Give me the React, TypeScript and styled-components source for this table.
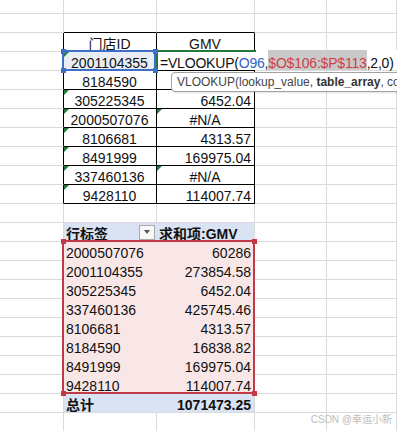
import React from "react";
import styled, { createGlobalStyle } from "styled-components";

const GlobalStyle = createGlobalStyle`
    html, body {
        margin: 0;
        padding: 0;
        background: #ffffff;
        overflow: hidden;
    }
    body {
        font-family: "Liberation Sans", Arial, "Noto Sans CJK SC", sans-serif;
        color: #111111;
    }
`;

type Line = "grid" | "black" | "none";

interface CellSpec {
    text?: React.ReactNode;
    align?: "left" | "center" | "right";
    bold?: boolean;
    flag?: boolean;
    bg?: string;
    right?: Line;
    bottom?: Line;
    dropdown?: boolean;
}

const HEADER_BG = "#dae3f3";
const PIVOT_BG = "#f9e7e8";
const GREEN = "#217a3c";

const lineColor = (l?: Line) =>
    l === "black" ? "#000000" : l === "none" ? "transparent" : "#dadada";

const Sheet = styled.div`
    position: relative;
    width: 397px;
    height: 431px;
    overflow: hidden;
    display: grid;
    grid-template-columns: 64px 93px 98px 72px 1fr;
    grid-template-rows: 14px repeat(22, 19px);
`;

const Cell = styled.div<{
    $r: number;
    $c: number;
    $align: string;
    $bold?: boolean;
    $bg?: string;
    $right?: Line;
    $bottom?: Line;
    $flag?: boolean;
}>`
    grid-row: ${(p) => p.$r + 1};
    grid-column: ${(p) => p.$c + 1};
    position: relative;
    box-sizing: border-box;
    display: flex;
    align-items: flex-end;
    justify-content: ${(p) =>
        p.$align === "right"
            ? "flex-end"
            : p.$align === "center"
              ? "center"
              : "space-between"};
    padding: 0 3px 0 2px;
    font-size: 14px;
    line-height: 14px;
    font-weight: ${(p) => (p.$bold ? 700 : 400)};
    white-space: nowrap;
    background: ${(p) => p.$bg || "transparent"};
    border-right: 1px solid ${(p) => lineColor(p.$right)};
    border-bottom: 1px solid ${(p) => lineColor(p.$bottom)};

    &::before {
        content: "";
        display: ${(p) => (p.$flag ? "block" : "none")};
        position: absolute;
        top: 0;
        left: 0;
        border-top: 5px solid ${GREEN};
        border-right: 5px solid transparent;
    }
`;

const DropButton = styled.span`
    align-self: center;
    box-sizing: border-box;
    width: 16px;
    height: 15px;
    margin-right: -2px;
    display: flex;
    align-items: center;
    justify-content: center;
    background: #f8f8f8;
    border: 1px solid #a9a9a9;

    &::after {
        content: "";
        border-left: 3.5px solid transparent;
        border-right: 3.5px solid transparent;
        border-top: 4px solid #555555;
    }
`;

const Handle = styled.span<{ $color: string; $x: "l" | "r"; $y: "t" | "b" }>`
    position: absolute;
    width: 5px;
    height: 5px;
    background: ${(p) => p.$color};
    ${(p) => (p.$x === "l" ? "left: -3.5px;" : "right: -3.5px;")}
    ${(p) => (p.$y === "t" ? "top: -3.5px;" : "bottom: -3.5px;")}
`;

const SelectFrame = styled.div`
    grid-row: 4 / 5;
    grid-column: 2 / 3;
    position: relative;
    z-index: 3;
    margin: -2px 1px 0 -2px;
    border: 2px solid #3d6fc6;
    pointer-events: none;
`;

const PivotFrame = styled.div`
    grid-row: 14 / 22;
    grid-column: 2 / 4;
    position: relative;
    z-index: 2;
    margin: -2px 0 0 -2px;
    border: 2px solid #c23a45;
    pointer-events: none;
`;

const Editor = styled.div`
    grid-row: 4 / 5;
    grid-column: 3 / 6;
    position: relative;
    z-index: 2;
    margin: -2px 0 1px -1px;
    padding-left: 2px;
    display: flex;
    align-items: flex-end;
    background: #ffffff;
    border-left: 2px solid ${GREEN};
    font-size: 14px;
    line-height: 14px;
    letter-spacing: -0.2px;
    white-space: nowrap;

    &::before {
        content: "";
        position: absolute;
        top: 0;
        left: -2px;
        width: 100px;
        height: 2px;
        background: ${GREEN};
    }
`;

const CellRef = styled.span`
    color: #2f62c4;
`;

const RangeRef = styled.span`
    display: inline-block;
    padding-top: 6px;
    color: #cf3f4a;
    background: #c9c9c9;
`;

const Tooltip = styled.div`
    position: absolute;
    top: 22px;
    left: 13px;
    right: -40px;
    height: 20px;
    box-sizing: border-box;
    padding-left: 5px;
    background: #ffffff;
    border: 1px solid #a3a3a3;
    border-radius: 4px;
    box-shadow: 1px 1px 2px rgba(0, 0, 0, 0.12);
    color: #444444;
    font-size: 12px;
    line-height: 18px;
    letter-spacing: 0;
    overflow: hidden;
`;

const Arg = styled.b`
    color: #333333;
`;

const Watermark = styled.div`
    position: absolute;
    right: 5px;
    bottom: 5px;
    z-index: 4;
    font-size: 10px;
    line-height: 12px;
    color: #bcbcbc;
    font-family: "Liberation Sans", "Noto Sans CJK SC", sans-serif;
`;

const lookupRows: [string, string, boolean, boolean][] = [
    ["2001104355", "", true, false],
    ["8184590", "", false, false],
    ["305225345", "6452.04", true, false],
    ["2000507076", "#N/A", true, true],
    ["8106681", "4313.57", true, false],
    ["8491999", "169975.04", true, false],
    ["337460136", "#N/A", true, true],
    ["9428110", "114007.74", true, false],
];

const pivotRows: [string, string][] = [
    ["2000507076", "60286"],
    ["2001104355", "273854.58"],
    ["305225345", "6452.04"],
    ["337460136", "425745.46"],
    ["8106681", "4313.57"],
    ["8184590", "16838.82"],
    ["8491999", "169975.04"],
    ["9428110", "114007.74"],
];

function buildSheet(): CellSpec[][] {
    const grid: CellSpec[][] = Array.from({ length: 23 }, () =>
        Array.from({ length: 5 }, () => ({}) as CellSpec),
    );

    // lookup table, rows 2..10
    grid[1][1].bottom = "black";
    grid[1][2].bottom = "black";
    for (let r = 2; r <= 10; r++) {
        grid[r][0].right = "black";
        grid[r][1] = { ...grid[r][1], right: "black", bottom: "black", align: "center" };
        grid[r][2] = { ...grid[r][2], right: "black", bottom: "black", align: "right" };
    }
    grid[2][1].text = "门店ID";
    grid[2][2].text = "GMV";
    grid[2][2].align = "center";
    lookupRows.forEach(([id, gmv, idFlag, gmvFlag], i) => {
        const r = 3 + i;
        grid[r][1].text = id;
        grid[r][1].flag = idFlag;
        grid[r][2].text = gmv;
        grid[r][2].flag = gmvFlag;
        if (gmv === "#N/A") grid[r][2].align = "center";
    });
    grid[3][1].bg = "#e8edf6";

    // pivot table
    grid[12][1] = { text: "行标签", bold: true, bg: HEADER_BG, right: "none", bottom: "none", dropdown: true };
    grid[12][2] = { text: "求和项:GMV", bold: true, bg: HEADER_BG, bottom: "none", align: "left" };
    pivotRows.forEach(([id, v], i) => {
        const r = 13 + i;
        grid[r][1] = { text: id, bg: PIVOT_BG, right: "none", bottom: "none", align: "left" };
        grid[r][2] = { text: v, bg: PIVOT_BG, bottom: "none", align: "right" };
    });
    grid[21][1] = { text: "总计", bold: true, bg: HEADER_BG, right: "none", align: "left" };
    grid[21][2] = { text: "1071473.25", bold: true, bg: HEADER_BG, align: "right" };

    return grid;
}

const sheet = buildSheet();

const corners: ["l" | "r", "t" | "b"][] = [
    ["l", "t"],
    ["r", "t"],
    ["l", "b"],
    ["r", "b"],
];

export default function App() {
    return (
        <>
            <GlobalStyle />
            <Sheet>
                {sheet.map((row, r) =>
                    row.map((cell, c) => (
                        <Cell
                            key={`${r}-${c}`}
                            $r={r}
                            $c={c}
                            $align={cell.align || "left"}
                            $bold={cell.bold}
                            $bg={cell.bg}
                            $right={cell.right}
                            $bottom={cell.bottom}
                            $flag={cell.flag}
                        >
                            {cell.text && <span>{cell.text}</span>}
                            {cell.dropdown && <DropButton />}
                        </Cell>
                    )),
                )}

                <Editor>
                    =VLOOKUP(<CellRef>O96</CellRef>,
                    <RangeRef>$O$106:$P$113</RangeRef>,2,0)
                    <Tooltip>
                        VLOOKUP(lookup_value, <Arg>table_array</Arg>, col_index_num, [range_lookup])
                    </Tooltip>
                </Editor>

                <SelectFrame>
                    {corners.map(([x, y]) => (
                        <Handle key={x + y} $color="#3d6fc6" $x={x} $y={y} />
                    ))}
                </SelectFrame>

                <PivotFrame>
                    {corners.map(([x, y]) => (
                        <Handle key={x + y} $color="#c23a45" $x={x} $y={y} />
                    ))}
                </PivotFrame>

                <Watermark>CSDN @幸运小新</Watermark>
            </Sheet>
        </>
    );
}
